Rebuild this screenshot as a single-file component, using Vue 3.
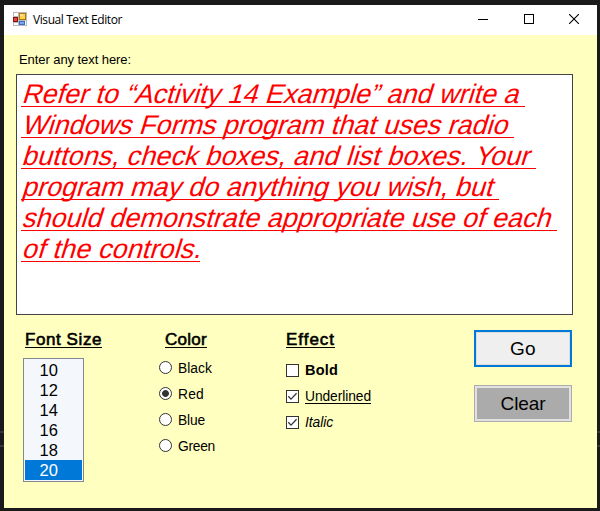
<script setup>
import { ref } from 'vue'

const lines = [
  { text: 'Refer to “Activity 14 Example” and write a ', width: 504 },
  { text: 'Windows Forms program that uses radio ', width: 493 },
  { text: 'buttons, check boxes, and list boxes. Your ', width: 515 },
  { text: 'program may do anything you wish, but ', width: 478 },
  { text: 'should demonstrate appropriate use of each ', width: 536 },
  { text: 'of the controls.', width: 179 },
]
const sizes = [10, 12, 14, 16, 18, 20]
const selectedSize = ref(20)
const colors = [
  { name: 'Black', width: 34 },
  { name: 'Red', width: 26 },
  { name: 'Blue', width: 27 },
  { name: 'Green', width: 37 },
]
const color = ref('Red')
const effects = ref([
  { name: 'Bold', style: 'bold', on: false, width: 33 },
  { name: 'Underlined', style: 'underlined', on: true, width: 66 },
  { name: 'Italic', style: 'italic', on: true, width: 28 },
])

// Spreads letter spacing so that a text fills the given width.
const vFit = {
  mounted(el, { value }) {
    const natural = el.getBoundingClientRect().width
    el.style.letterSpacing = (value - natural) / el.textContent.length + 'px'
  },
}
</script>

<template>
  <div class="desktop">
    <div class="window">
      <header class="titlebar">
        <svg class="app-icon" width="14" height="14" viewBox="0 0 14 14" shape-rendering="crispEdges">
          <rect width="14" height="14" fill="#b9b9b9" />
          <path d="M1 1h4v3H1zM1 11h4v2H1zM6 9h7v4H6z" fill="#fff" />
          <rect x="0" y="5" width="5" height="5" fill="#8e1010" />
          <rect x="1" y="6" width="3" height="3" fill="#d84a42" />
          <rect x="6" y="1" width="7" height="7" fill="#b17a10" />
          <rect x="7" y="2" width="5" height="5" fill="#ffd24c" />
          <rect x="7" y="2" width="3" height="2" fill="#ffe693" />
          <rect x="6" y="9" width="6" height="4" fill="#3d6fc4" />
          <rect x="7" y="10" width="4" height="2" fill="#78a8f5" />
        </svg>
        <span v-fit="89" class="title">Visual Text Editor</span>
        <div class="window-buttons">
          <svg width="10" height="10" viewBox="0 0 10 10" shape-rendering="crispEdges"><path d="M0 5.5h10" stroke="#000" /></svg>
          <svg width="10" height="10" viewBox="0 0 10 10" shape-rendering="crispEdges"><rect x=".5" y=".5" width="9" height="9" fill="none" stroke="#000" /></svg>
          <svg width="10" height="10" viewBox="0 0 10 10"><path d="M0 0l10 10M10 0L0 10" stroke="#000" stroke-width="1.1" /></svg>
        </div>
      </header>

      <main class="form">
        <div class="prompt"><span v-fit="112">Enter any text here:</span></div>
        <div class="editor">
          <div v-for="l in lines" :key="l.text" class="line">
            <span v-fit="l.width" class="rule"><span class="slant">{{ l.text }}</span></span>
          </div>
        </div>

        <div class="controls">
          <section class="size-group">
            <h2><span v-fit="77">Font Size</span></h2>
            <ul class="listbox">
              <li v-for="s in sizes" :key="s" :class="{ selected: s === selectedSize }" @click="selectedSize = s">{{ s }}</li>
            </ul>
          </section>

          <section class="color-group">
            <h2><span v-fit="42">Color</span></h2>
            <div v-for="c in colors" :key="c.name" class="option" @click="color = c.name">
              <i class="radio" :class="{ on: color === c.name }"></i>
              <span v-fit="c.width">{{ c.name }}</span>
            </div>
          </section>

          <section class="effect-group">
            <h2><span v-fit="49">Effect</span></h2>
            <div v-for="e in effects" :key="e.name" class="option" @click="e.on = !e.on">
              <i class="check">
                <svg v-if="e.on" width="11" height="11" viewBox="0 0 11 11"><path d="M1.3 5.3l2.7 2.8 5.6-5.8" fill="none" stroke="#333" stroke-width="1.3" /></svg>
              </i>
              <span v-fit="e.width" :class="e.style">{{ e.name }}</span>
            </div>
          </section>

          <section class="actions">
            <button class="go"><span v-fit="26">Go</span></button>
            <button class="clear"><span v-fit="45">Clear</span></button>
          </section>
        </div>
      </main>
    </div>
  </div>
</template>

<style>
body {
  margin: 0;
}
</style>

<style scoped>
.desktop {
  box-sizing: border-box;
  width: 600px;
  height: 511px;
  padding: 5px 3px 3px 4px;
  background:
    linear-gradient(#363636, #363636) 0 431px / 100% 2px no-repeat,
    linear-gradient(#363636, #363636) 0 445px / 100% 2px no-repeat,
    #1a1a1a;
  font-family: "Liberation Sans", Arial, sans-serif;
  color: #000;
}
.window {
  display: flex;
  flex-direction: column;
  height: 503px;
  overflow: hidden;
  background: #ffffc0;
}
.titlebar {
  display: flex;
  align-items: center;
  box-sizing: border-box;
  height: 30px;
  padding: 0 18px 0 9px;
  background: #fff;
}
.app-icon {
  margin-top: -2px;
}
.title {
  margin-left: 6px;
  font: 12px/16px "Open Sans", "Noto Sans", sans-serif;
  white-space: nowrap;
}
.window-buttons {
  display: flex;
  gap: 35.5px;
  margin: -2px 0 0 auto;
}
.window-buttons svg {
  display: block;
}
.form {
  flex: 1;
  padding: 16px 24px 0 12px;
}
.prompt {
  height: 23px;
  padding-left: 3px;
  font-size: 13px;
  line-height: 17px;
  white-space: nowrap;
}
.editor {
  box-sizing: border-box;
  width: 557px;
  height: 241px;
  padding: 3px 4px;
  border: 1px solid #444;
  background: #fff;
  color: #f00;
  font-size: 27px;
}
.line {
  display: flex;
  height: 31px;
}
.rule {
  box-sizing: border-box;
  height: 29px;
  border-bottom: 1px solid #f00;
  line-height: 33px;
  white-space: pre;
}
.slant {
  display: inline-block;
  transform: skewX(-17deg);
  transform-origin: 0 26px;
}
.controls {
  display: grid;
  grid-template-columns: 136px 127px 188px 98px;
  padding: 15px 0 0 7px;
}
h2 {
  display: flex;
  margin: 0;
  font-size: 17px;
  font-weight: 400;
  line-height: 20px;
  -webkit-text-stroke: 0.6px #000;
  white-space: nowrap;
}
h2 span {
  box-sizing: border-box;
  height: 18px;
  border-bottom: 1px solid #000;
}
.size-group h2 {
  padding-left: 2px;
}
.color-group h2 {
  padding-left: 6px;
}
.listbox {
  box-sizing: border-box;
  width: 61px;
  height: 124px;
  margin: 10px 0 0;
  padding: 1px;
  border: 1px solid #828790;
  background: #f4f8fd;
  list-style: none;
}
.listbox li {
  height: 20px;
  padding-left: 14.5px;
  font-size: 16.5px;
  line-height: 21px;
}
.listbox .selected {
  background: #0078d7;
  color: #fff;
}
.option {
  display: flex;
  align-items: center;
  gap: 6px;
  height: 26px;
  font-size: 13.8px;
  white-space: nowrap;
}
.option span {
  line-height: 15px;
}
.color-group h2 {
  margin-bottom: 7px;
}
.effect-group h2 {
  margin-bottom: 9px;
}
.radio,
.check {
  box-sizing: border-box;
  flex: none;
  width: 13px;
  height: 13px;
  border: 1px solid #333;
  background: #fff;
}
.radio {
  margin-top: -1px;
  border-radius: 50%;
}
.radio.on {
  background: radial-gradient(circle, #333 3px, #fff 3.8px);
}
.check svg {
  display: block;
}
.option .bold {
  font-size: 14.5px;
  font-weight: 700;
}
.option .underlined {
  box-sizing: border-box;
  height: 15px;
  border-bottom: 1px solid #000;
}
.italic {
  font-style: italic;
}
.actions {
  display: flex;
  flex-direction: column;
  gap: 18px;
}
button {
  box-sizing: border-box;
  width: 98px;
  height: 37px;
  padding: 0;
  color: #000;
  font: 19px/21px "Liberation Sans", Arial, sans-serif;
}
button span {
  display: inline-block;
}
.go {
  border: 2px solid #0078d7;
  background: #efefef;
  box-shadow: inset 0 0 0 1px #dedede;
}
.clear {
  border: 1px solid #adadad;
  background: #ababab;
  box-shadow: inset 0 0 0 2px #e1e1e1;
}
</style>
